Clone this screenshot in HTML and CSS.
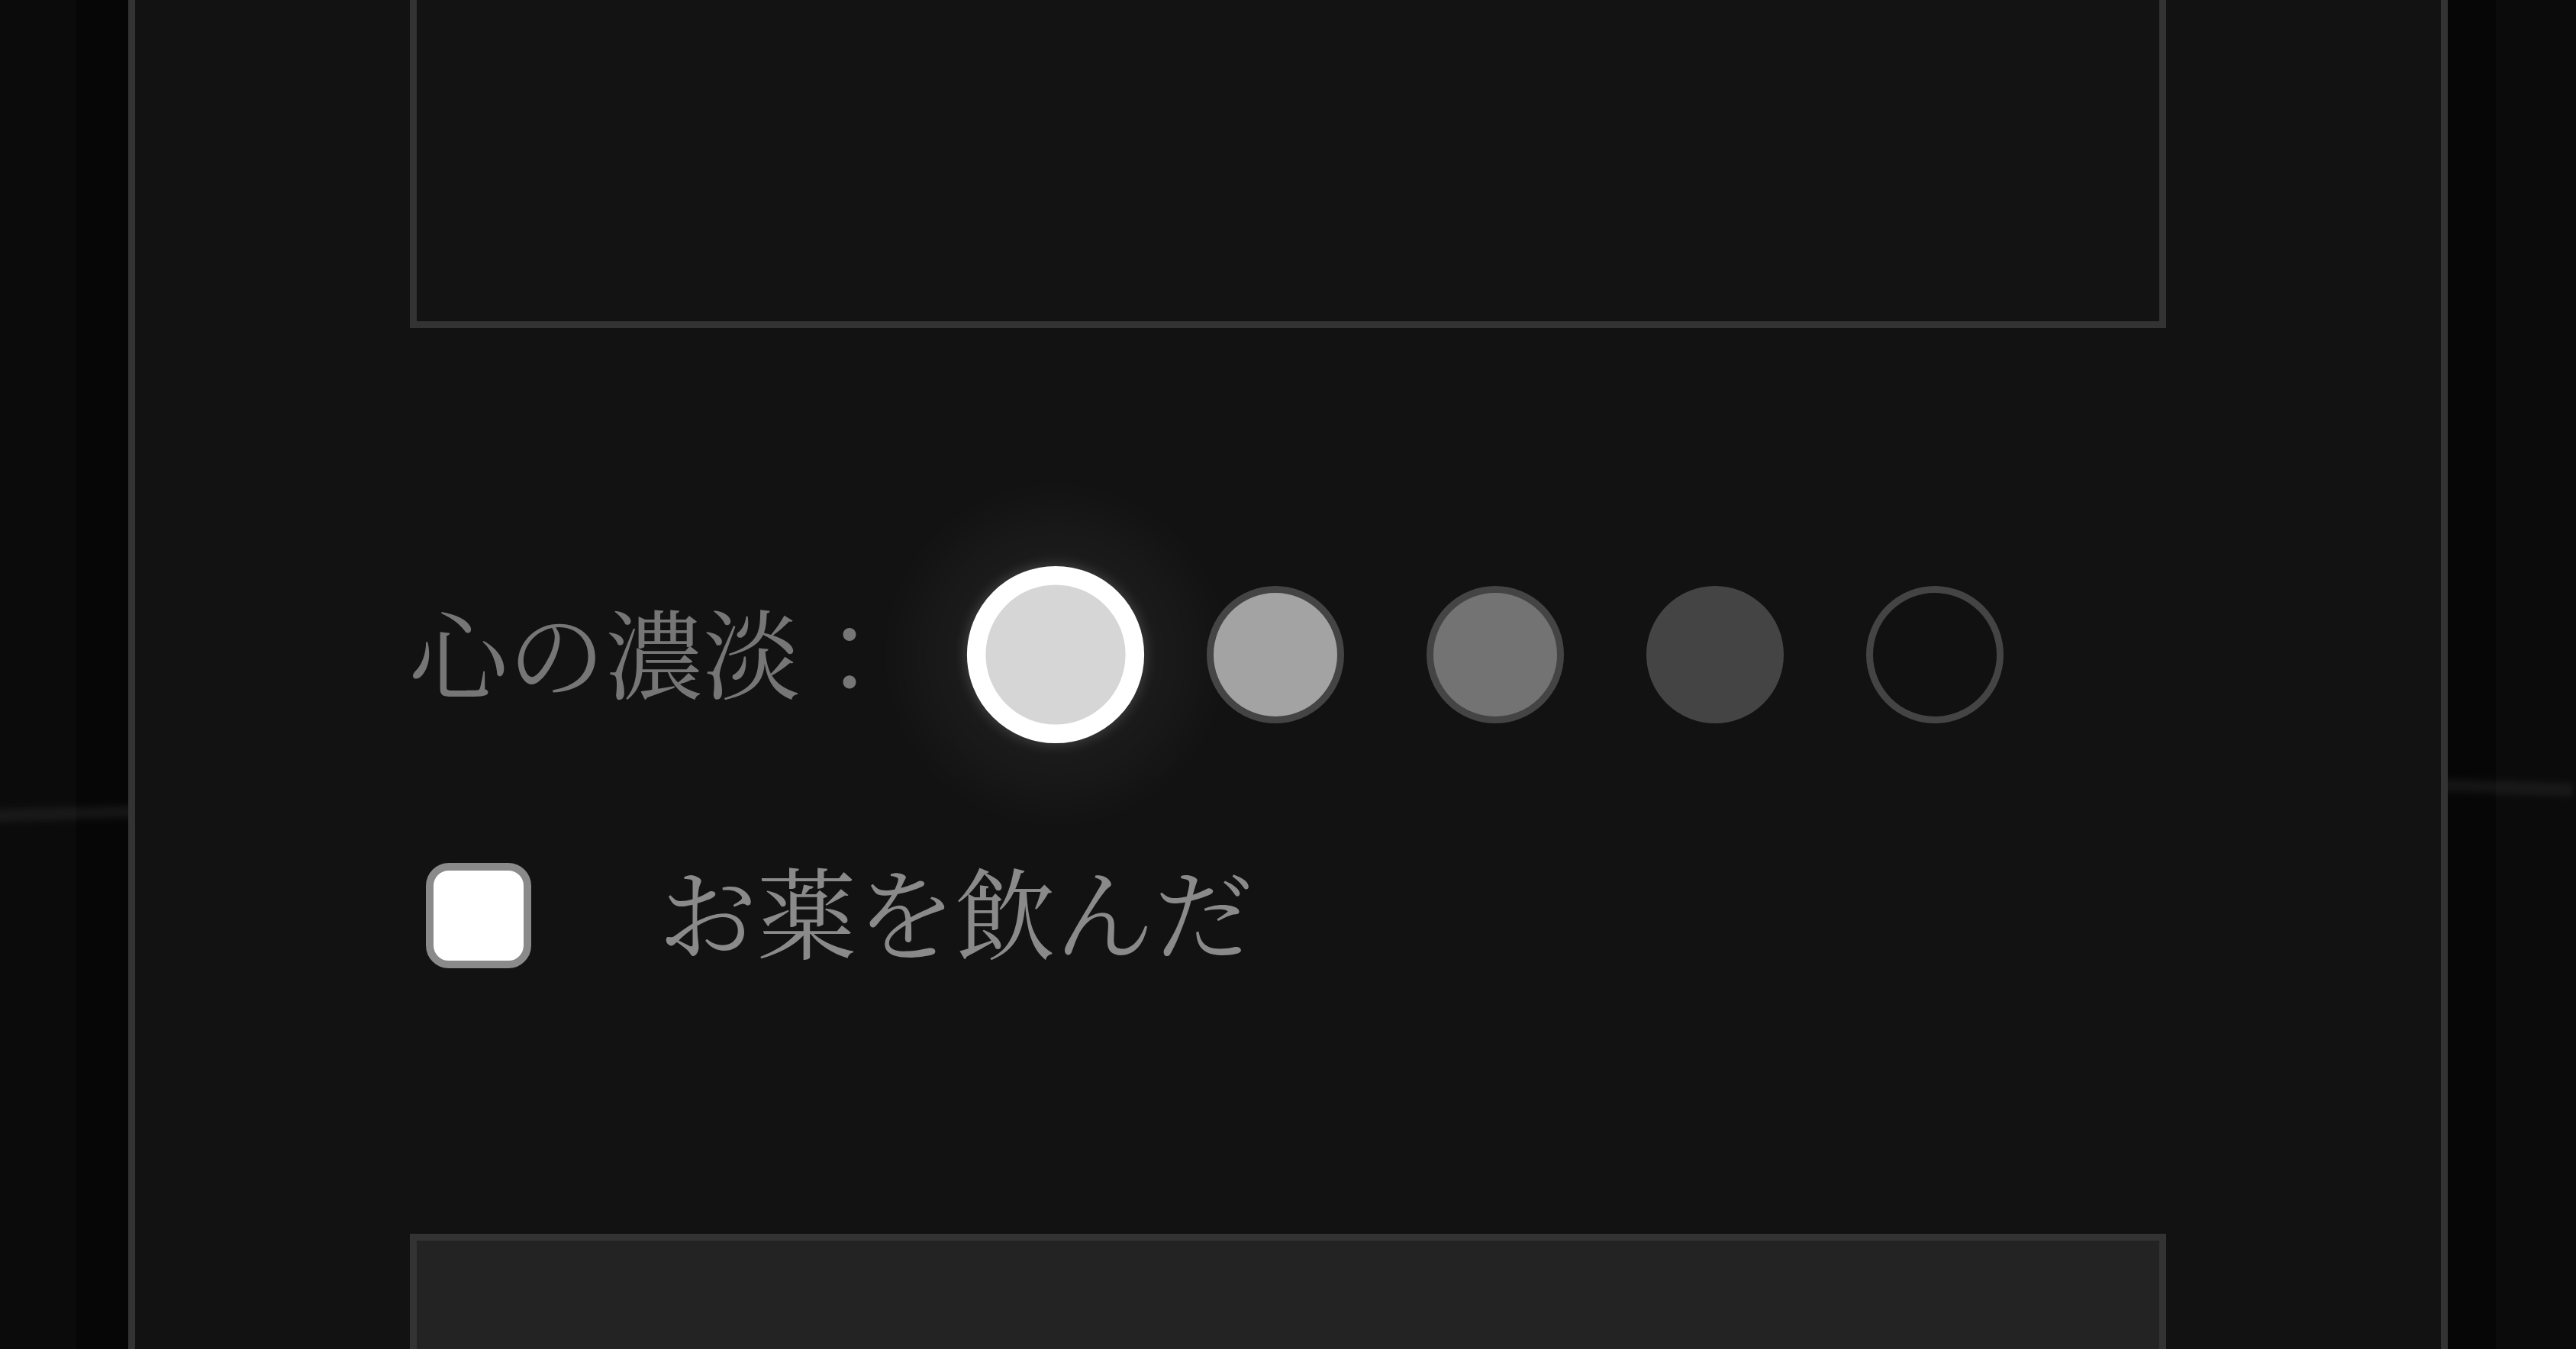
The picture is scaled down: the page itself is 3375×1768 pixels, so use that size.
FILE: index.html
```html
<!DOCTYPE html>
<html lang="ja">
<head>
<meta charset="utf-8">
<title>記録</title>
<link rel="stylesheet" href="styles.css">
</head>
<body>
<div class="streak streak-left"></div>
<div class="streak streak-right"></div>
<main class="frame">
  <div class="note-box"></div>
  <div class="mood-row">
    <span class="mood-label">心の濃淡：</span>
    <div class="mood-dots">
      <span class="dot dot-1 is-selected"></span>
      <span class="dot dot-2"></span>
      <span class="dot dot-3"></span>
      <span class="dot dot-4"></span>
      <span class="dot dot-5"></span>
    </div>
  </div>
  <label class="med-row">
    <span class="check"></span>
    <span class="med-text">お薬を飲んだ</span>
  </label>
  <div class="save-box"></div>
</main>
</body>
</html>
```

FILE: styles.css
```css
html, body {
  margin: 0;
  padding: 0;
  height: 100%;
  overflow: hidden;
}

body {
  position: relative;
  background: linear-gradient(to right, #0b0b0b 0, #0b0b0b 100px, #060606 100px, #060606 3270px, #0b0b0b 3270px);
  font-family: "Noto Serif CJK JP", "Noto Sans CJK JP", serif;
}

.streak {
  position: absolute;
  height: 16px;
  background: rgba(255, 255, 255, 0.06);
  filter: blur(5px);
  z-index: 0;
}

.streak-left {
  left: -10px;
  top: 1058px;
  width: 200px;
  transform: rotate(-1.8deg);
}

.streak-right {
  left: 3190px;
  top: 1024px;
  width: 180px;
  transform: rotate(2deg);
}

.frame {
  position: relative;
  z-index: 1;
  box-sizing: border-box;
  width: 3039px;
  height: 1768px;
  margin: 0 auto;
  padding: 0 360px;
  background: #121212;
  border-left: 9px solid #333;
  border-right: 9px solid #333;
  display: flex;
  flex-direction: column;
}

.note-box {
  box-sizing: border-box;
  height: 630px;
  margin-top: -200px;
  border: 9px solid #333;
  background: #131313;
  flex: none;
}

.mood-row {
  display: flex;
  align-items: center;
  height: 180px;
  margin-top: 338px;
  flex: none;
}

.mood-label {
  font-size: 128px;
  line-height: 1;
  color: #767676;
  width: 756px;
  padding-bottom: 12px;
  flex: none;
  white-space: nowrap;
}

.mood-dots {
  display: flex;
  gap: 108px;
  align-items: center;
}

.dot {
  box-sizing: border-box;
  display: block;
  width: 180px;
  height: 180px;
  border-radius: 50%;
  border: 9px solid #444;
}

.dot-1 { background: #d6d6d6; }
.dot-2 { background: #a3a3a3; }
.dot-3 { background: #737373; }
.dot-4 { background: #444; }
.dot-5 { background: #111; }

.dot.is-selected {
  border: 19px solid #fff;
  transform: scale(1.29);
  box-shadow: 0 0 60px 60px rgba(255, 255, 255, 0.04), 0 0 12px 3px rgba(255, 255, 255, 0.15);
}

.med-row {
  display: flex;
  align-items: center;
  gap: 166px;
  height: 138px;
  margin-top: 183px;
  padding-left: 21px;
  flex: none;
}

.check {
  box-sizing: border-box;
  display: block;
  width: 138px;
  height: 138px;
  border: 10px solid #8a8a8a;
  border-radius: 30px;
  background: #fff;
  filter: blur(0.6px);
}

.med-text {
  font-size: 130px;
  line-height: 1;
  color: #8a8a8a;
  padding-bottom: 18px;
  white-space: nowrap;
}

.save-box {
  box-sizing: border-box;
  height: 400px;
  margin-top: 348px;
  border: 9px solid #333;
  background: #232323;
  flex: none;
}
```
